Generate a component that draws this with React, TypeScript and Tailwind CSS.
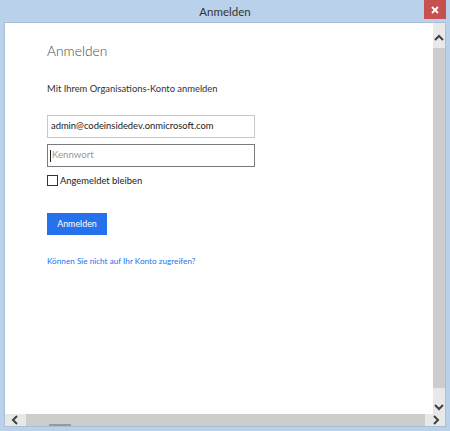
import React from "react";

const font = { fontFamily: 'Lato, "Open Sans", sans-serif' };

function Chevron({ dir }: { dir: "up" | "down" | "left" | "right" }) {
  const d: Record<string, string> = {
    up: "M1 6 L5 2 L9 6",
    down: "M1 2 L5 6 L9 2",
    left: "M6 1 L2 5 L6 9",
    right: "M2 1 L6 5 L2 9",
  };
  const vertical = dir === "up" || dir === "down";
  return (
    <svg
      width={vertical ? 10 : 8}
      height={vertical ? 8 : 10}
      viewBox={vertical ? "0 0 10 8" : "0 0 8 10"}
      fill="none"
      stroke="#404040"
      strokeWidth="2"
    >
      <path d={d[dir]} />
    </svg>
  );
}

export default function App() {
  return (
    <div
      className="w-[450px] h-[431px] bg-[#b9d1ea] flex flex-col overflow-hidden"
      style={font}
    >
      {/* title bar */}
      <div className="h-[22px] grid grid-cols-[1fr_auto_1fr] items-start shrink-0">
        <div />
        <div className="text-[11.5px] text-[#333] leading-[22px] pt-[1px]">Anmelden</div>
        <div className="flex justify-end pr-[4px]">
          <div className="w-[22px] h-[19px] bg-[#c75050] flex items-center justify-center">
            <svg width="8" height="8" viewBox="0 0 8 8" stroke="white" strokeWidth="1.8">
              <path d="M1 1 L7 7 M7 1 L1 7" />
            </svg>
          </div>
        </div>
      </div>

      {/* client */}
      <div className="mx-[4px] border border-[#a9bfd6] flex-1 flex flex-col bg-white h-[405px]">
        <div className="flex flex-1 min-h-0">
          {/* content */}
          <div className="flex-1 pl-[42px] pt-[18px]">
            <div className="text-[13.8px] font-light text-[#4a4a4a] leading-[20px]">Anmelden</div>
            <div className="mt-[21px] text-[9.4px] text-[#333] leading-[14px]">
              Mit Ihrem Organisations-Konto anmelden
            </div>
            <div className="mt-[19px] w-[208px] h-[23px] border border-[#c8c8c8] flex items-center pl-[3px] text-[9.4px] text-[#222]">
              admin@codeinsidedev.onmicrosoft.com
            </div>
            <div className="mt-[6px] w-[208px] h-[23px] border border-[#7a7a7a] flex items-center pl-[2px] text-[9.6px] text-[#999]">
              <span className="w-[1px] h-[12px] bg-[#222] mr-[1px]" />
              Kennwort
            </div>
            <div className="mt-[7px] flex items-center gap-[2px]">
              <div className="w-[11px] h-[11px] border border-[#333] bg-white" />
              <span className="text-[9.4px] text-[#222] leading-[13px]">Angemeldet bleiben</span>
            </div>
            <button className="mt-[26px] w-[60px] h-[22px] bg-[#2672ec] text-white text-[8.9px] flex items-center justify-center">
              Anmelden
            </button>
            <div className="mt-[20px] text-[8.2px] text-[#2672ec] leading-[12px]">
              Können Sie nicht auf Ihr Konto zugreifen?
            </div>
          </div>
          {/* vertical scrollbar */}
          <div className="w-[12px] bg-[#e8e8e8] flex flex-col items-center shrink-0">
            <div className="h-[24px] flex items-center justify-center pt-[6px]">
              <Chevron dir="up" />
            </div>
            <div className="w-full flex-1 bg-[#cdcdcd] mt-[1px] mb-[14px]" />
            <div className="h-[10px] flex items-center justify-center mb-[2px]">
              <Chevron dir="down" />
            </div>
          </div>
        </div>
        {/* horizontal scrollbar */}
        <div className="h-[12px] bg-[#e8e8e8] flex items-center shrink-0">
          <div className="w-[20px] flex items-center justify-center">
            <Chevron dir="left" />
          </div>
          <div className="flex-1 h-full bg-[#cdcdcd] ml-[1px] mr-[2px] flex items-end">
            <div className="ml-[23px] w-[22px] h-[2px] bg-[#999]" />
          </div>
          <div className="w-[18px] flex items-center justify-center">
            <Chevron dir="right" />
          </div>
        </div>
      </div>
      <div className="h-[4px] shrink-0" />
    </div>
  );
}
